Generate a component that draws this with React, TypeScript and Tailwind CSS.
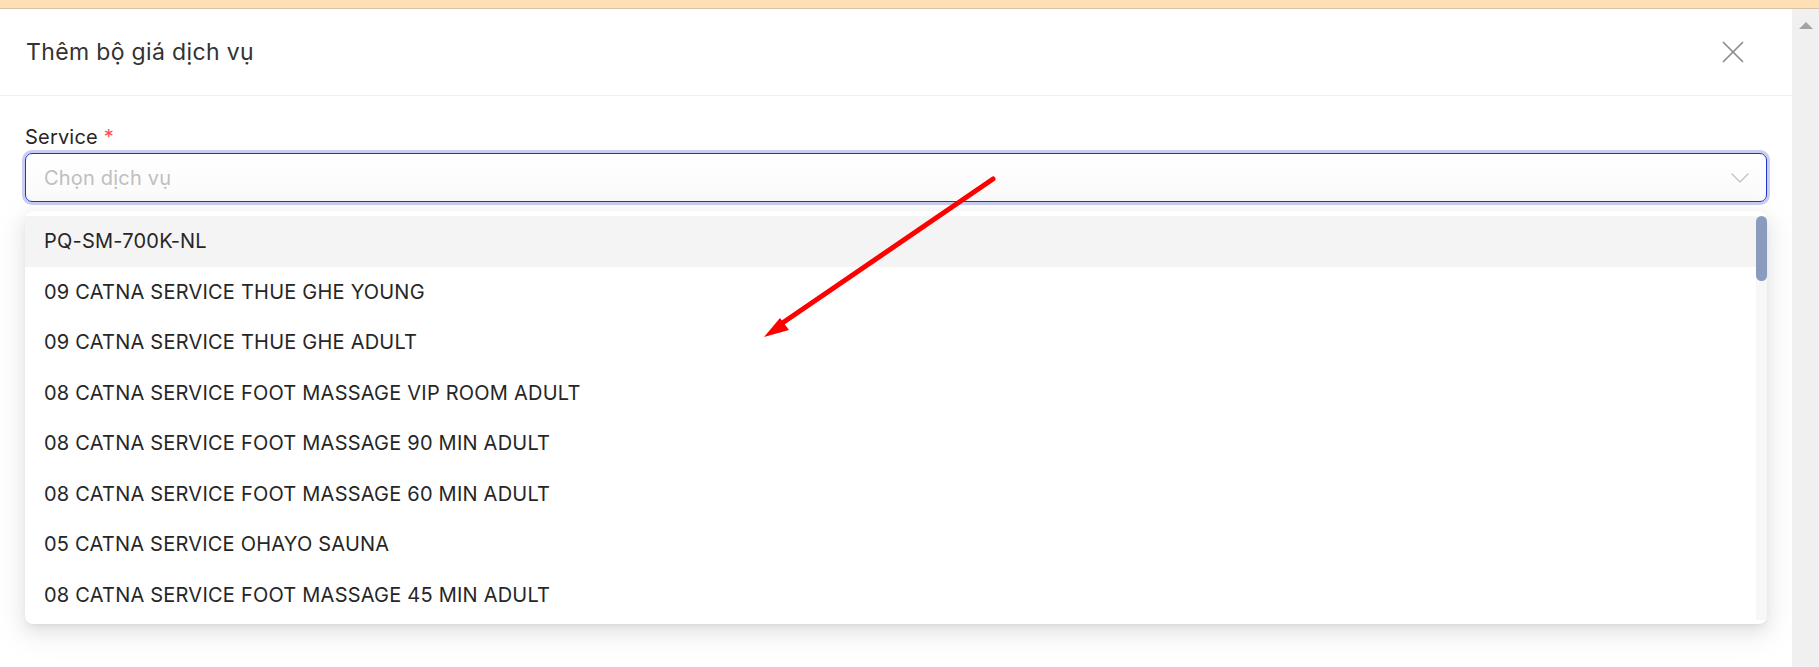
import { ChevronDown, X } from 'lucide-react'

const services = [
  'PQ-SM-700K-NL',
  '09 CATNA SERVICE THUE GHE YOUNG',
  '09 CATNA SERVICE THUE GHE ADULT',
  '08 CATNA SERVICE FOOT MASSAGE VIP ROOM ADULT',
  '08 CATNA SERVICE FOOT MASSAGE 90 MIN ADULT',
  '08 CATNA SERVICE FOOT MASSAGE 60 MIN ADULT',
  '05 CATNA SERVICE OHAYO SAUNA',
  '08 CATNA SERVICE FOOT MASSAGE 45 MIN ADULT',
]

export default function App() {
  return (
    <div className="relative flex h-[667px] w-full flex-col overflow-hidden bg-white font-['Inter',sans-serif]">
      <div className="h-[9px] shrink-0 border-b border-[#d8c3a6] bg-[#ffe0b6]" />

      <div className="flex flex-1">
        <div className="flex-1">
          <div className="flex h-[87px] items-center justify-between border-b border-[#f0f0f0] pl-[26px] pr-[40px]">
            <h1 className="text-[23px] font-normal tracking-[0.35px] text-[#333]">Thêm bộ giá dịch vụ</h1>
            <X className="h-[38px] w-[38px] text-[#8c8c8c]" strokeWidth={1.1} />
          </div>

          <div className="px-[25px] pt-[29px]">
            <label className="block text-[20px] leading-[24px] tracking-[0.2px] text-[#262626]">
              Service <span className="text-[#ff4d4f]">*</span>
            </label>

            <div className="mt-[4px] flex h-[49px] items-center justify-between rounded-[7px] border border-[#2233c9] bg-gradient-to-b from-white to-[#fafafa] pl-[18px] pr-[10px] shadow-[0_0_0_3px_#c9cdf0]">
              <span className="text-[20px] tracking-[0.2px] text-[#bfbfbf]">Chọn dịch vụ</span>
              <ChevronDown className="h-[32px] w-[32px] text-[#c4c4c4]" strokeWidth={1} />
            </div>

            <div className="mt-[9px] flex rounded-[8px] bg-white pt-[5px] pb-[4px] shadow-[0_6px_16px_0_rgba(0,0,0,0.08),0_3px_6px_-4px_rgba(0,0,0,0.12),0_9px_28px_8px_rgba(0,0,0,0.05)]">
              <ul className="flex-1">
                {services.map((s, i) => (
                  <li
                    key={s}
                    className={
                      'flex h-[50.5px] items-center pl-[19px] text-[20px] tracking-[0.22px] text-[#262626] ' +
                      (i === 0 ? 'bg-[#f4f4f4]' : '')
                    }
                  >
                    {s}
                  </li>
                ))}
              </ul>
              <div className="w-[11px] bg-[#f7f7f7]">
                <div className="h-[65px] rounded-full bg-[#8a9bbd]" />
              </div>
            </div>
          </div>
        </div>

        <div className="flex w-[27px] shrink-0 justify-center bg-[#f0f0f0] pt-[13px]">
          <div className="h-0 w-0 border-x-[7px] border-b-[7px] border-x-transparent border-b-[#a3a3a3]" />
        </div>
      </div>

      {/* annotation arrow */}
      <svg className="pointer-events-none absolute left-0 top-0" width="1819" height="667">
        <line x1="993" y1="179" x2="778" y2="326" stroke="#ff0000" strokeWidth="5" strokeLinecap="round" />
        <polygon points="764,337 780,318 789,330" fill="#ff0000" />
      </svg>
    </div>
  )
}
